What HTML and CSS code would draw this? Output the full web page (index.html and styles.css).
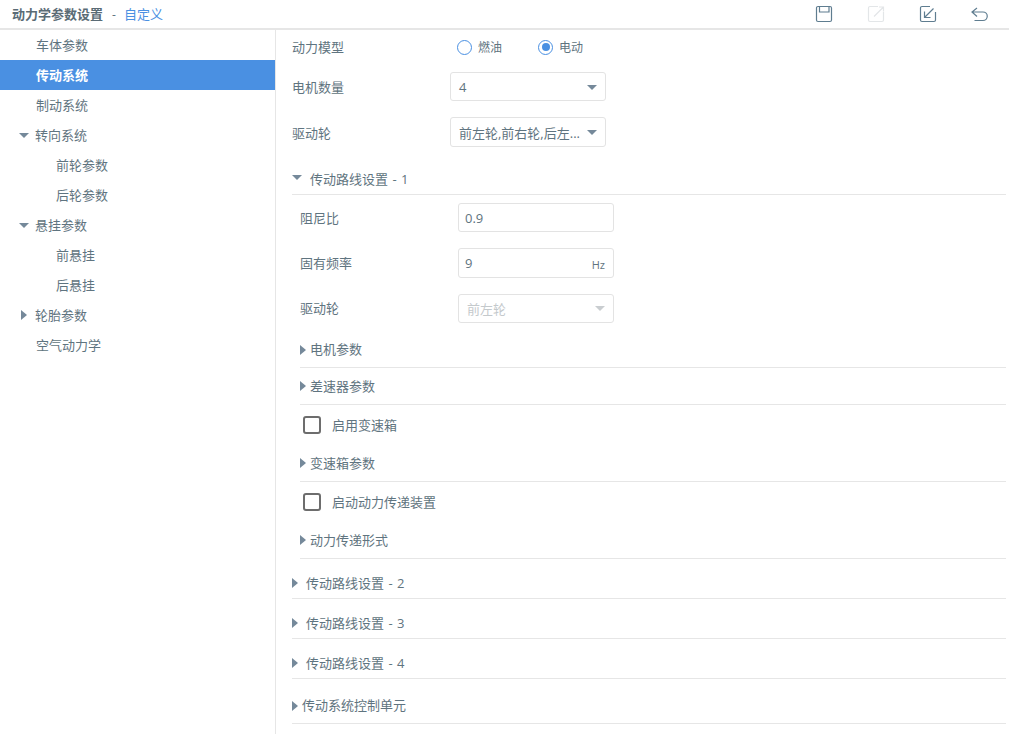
FILE: index.html
```html
<!DOCTYPE html>
<html lang="zh-CN">
<head>
    <meta charset="UTF-8">
    <title>动力学参数设置</title>
    <link rel="stylesheet" href="styles.css">
</head>
<body>

    <!-- Header -->
    <div class="header">
        <div class="title"><b>动力学参数设置</b><span class="dash">-</span><span class="custom">自定义</span></div>
        <div class="tools">
            <svg class="tool" viewBox="0 0 18 18"><path d="M3 1.500h12a1.500 1.500 0 0 1 1.500 1.500v12a1.500 1.500 0 0 1-1.500 1.500H3A1.500 1.500 0 0 1 1.500 15V3A1.500 1.500 0 0 1 3 1.500zM4.500 1.500v5.500h9.500V1.500"/></svg>
            <svg class="tool off" viewBox="0 0 18 18"><path d="M16.500 7v8a1.500 1.500 0 0 1-1.500 1.500H3A1.500 1.500 0 0 1 1.500 15V3A1.500 1.500 0 0 1 3 1.500h8M7 11.500l9-9M12 2h4.500v4.500"/></svg>
            <svg class="tool" viewBox="0 0 18 18"><path d="M16.500 7v8a1.500 1.500 0 0 1-1.500 1.500H3A1.500 1.500 0 0 1 1.500 15V3A1.500 1.500 0 0 1 3 1.500h8M14.500 3.500l-9 9M5.500 6.500v6h6"/></svg>
            <svg class="tool" viewBox="0 0 18 18"><path d="M6 3L1 7l5 4.500M1 7h11a4.250 4.250 0 0 1 0 8.500H3.500"/></svg>
        </div>
    </div>

    <div class="page">
        <!-- Left tree -->
        <div class="tree">
            <div class="node lv1">车体参数</div>
            <div class="node lv1 active">传动系统</div>
            <div class="node lv1">制动系统</div>
            <div class="node lv1 parent"><i class="arrow down"></i>转向系统</div>
            <div class="node lv2">前轮参数</div>
            <div class="node lv2">后轮参数</div>
            <div class="node lv1 parent"><i class="arrow down"></i>悬挂参数</div>
            <div class="node lv2">前悬挂</div>
            <div class="node lv2">后悬挂</div>
            <div class="node lv1 parent"><i class="arrow right"></i>轮胎参数</div>
            <div class="node lv1">空气动力学</div>
        </div>

        <!-- Form -->
        <div class="content">
            <div class="row row-radio">
                <label class="lbl">动力模型</label>
                <span class="radio"></span><span class="radio-text">燃油</span>
                <span class="radio on"></span><span class="radio-text">电动</span>
            </div>
            <div class="row row-motor">
                <label class="lbl">电机数量</label>
                <div class="select">4<i class="arrow down sel"></i></div>
            </div>
            <div class="row row-wheel">
                <label class="lbl">驱动轮</label>
                <div class="select">前左轮,前右轮,后左...<i class="arrow down sel"></i></div>
            </div>

            <div class="group g1"><i class="arrow down"></i>传动路线设置 - 1</div>

            <div class="sub">
                <div class="row f1">
                    <label class="lbl">阻尼比</label>
                    <div class="select field">0.9</div>
                </div>
                <div class="row f2">
                    <label class="lbl">固有频率</label>
                    <div class="select field">9<span class="unit">Hz</span></div>
                </div>
                <div class="row f3">
                    <label class="lbl">驱动轮</label>
                    <div class="select disabled">前左轮<i class="arrow down sel"></i></div>
                </div>
                <div class="fold s1"><i class="arrow right"></i>电机参数</div>
                <div class="fold s2"><i class="arrow right"></i>差速器参数</div>
                <div class="check"><span class="box"></span>启用变速箱</div>
                <div class="fold s2"><i class="arrow right"></i>变速箱参数</div>
                <div class="check"><span class="box"></span>启动动力传递装置</div>
                <div class="fold s2"><i class="arrow right"></i>动力传递形式</div>
            </div>

            <div class="group g2"><i class="arrow right"></i>传动路线设置 - 2</div>
            <div class="group g2"><i class="arrow right"></i>传动路线设置 - 3</div>
            <div class="group g2"><i class="arrow right"></i>传动路线设置 - 4</div>
            <div class="group g3"><i class="arrow right"></i>传动系统控制单元</div>
        </div>
    </div>

</body>
</html>
```

FILE: styles.css
```css
* {
    margin: 0;
    padding: 0;
    box-sizing: border-box;
}
html, body {
    height: 100%;
    overflow: hidden;
}
body {
    font-family: "Open Sans", "Noto Sans CJK SC", sans-serif;
    font-size: 13px;
    color: #5f7480;
    background: #fff;
    display: flex;
    flex-direction: column;
}

/* Header */
.header {
    height: 30px;
    flex: none;
    display: flex;
    justify-content: space-between;
    align-items: center;
    padding: 0 20px 0 12px;
    border-bottom: 2px solid #e6e6e6;
}
.title {
    margin-bottom: 2px;
}
.title b {
    font-weight: 700;
    color: #5a6b75;
}
.dash {
    margin: 0 8px 0 9px;
    font-size: 12px;
}
.custom {
    color: #4a90e2;
}
.tools {
    display: flex;
    gap: 34px;
}
.tool {
    width: 18px;
    height: 18px;
    fill: none;
    stroke: #5f7d90;
    stroke-width: 1.2;
}
.tool.off {
    stroke: #e3e6e8;
}

/* Tree */
.page {
    flex: 1;
    display: flex;
    min-height: 0;
}
.tree {
    width: 276px;
    flex: none;
    border-right: 1px solid #e6e6e6;
}
.node {
    height: 30px;
    line-height: 31px;
    position: relative;
}
.lv1 {
    padding-left: 36px;
}
.lv1.parent {
    padding-left: 35px;
}
.lv2 {
    padding-left: 56px;
}
.node.active {
    background: #4a90e2;
    color: #fff;
    font-weight: 700;
}
.node .arrow {
    position: absolute;
    left: 19px;
    top: 13px;
}
.node .arrow.right {
    left: 21px;
    top: 10px;
}

/* Arrows */
.arrow {
    display: inline-block;
    width: 0;
    height: 0;
    border-style: solid;
    border-color: transparent;
}
.arrow.down {
    border-width: 5px 5px 0;
    border-top-color: #75899a;
}
.arrow.right {
    border-width: 5px 0 5px 6px;
    border-left-color: #75899a;
}
.arrow.sel {
    position: absolute;
    right: 8px;
    top: 12px;
}

/* Form */
.content {
    flex: 1;
    padding: 0 3px 0 16px;
    min-width: 0;
}
.row {
    display: flex;
    align-items: center;
}
.lbl {
    width: 158px;
    flex: none;
}
.row-radio {
    height: 30px;
    padding-top: 2px;
}
.row-motor {
    height: 29px;
    margin-top: 12px;
}
.row-wheel {
    height: 30px;
    margin-top: 16px;
}
.radio {
    width: 15px;
    height: 15px;
    margin: 2px 6px 0 7px;
    border: 1px solid #4a90e2;
    border-radius: 50%;
    position: relative;
}
.radio.on::after {
    content: "";
    position: absolute;
    left: 2.5px;
    top: 2.5px;
    width: 8px;
    height: 8px;
    border-radius: 50%;
    background: #4a90e2;
}
.radio-text {
    margin-top: 2px;
    margin-right: 29px;
    font-size: 12px;
}
.select {
    width: 156px;
    height: 100%;
    border: 1px solid #e3e3e3;
    border-radius: 3px;
    padding-left: 8px;
    display: flex;
    align-items: center;
    position: relative;
}
.select.field {
    padding-left: 6px;
}
.select.disabled {
    color: #c4c9cc;
}
.select.disabled .arrow {
    top: 11px;
    border-top-color: #c9cdd0;
}
.unit {
    position: absolute;
    right: 8px;
    top: 8px;
    font-size: 11px;
}

/* Collapsible groups */
.group {
    position: relative;
    border-bottom: 1px solid #e6e6e6;
    word-spacing: 1px;
}
.group .arrow {
    position: absolute;
    left: 0;
}
.g1 {
    height: 31px;
    margin-top: 17px;
    padding-left: 18px;
    line-height: 30px;
}
.g1 .arrow {
    top: 11px;
}
.g2 {
    height: 40px;
    padding: 11px 0 0 14px;
    line-height: 26px;
}
.g2 .arrow {
    top: 19px;
}
.g3 {
    height: 45px;
    padding: 13px 0 0 10px;
    line-height: 26px;
}
.g3 .arrow {
    top: 22px;
}
.sub {
    padding-left: 8px;
}
.f1 {
    height: 29px;
    margin-top: 8px;
}
.f2 {
    height: 30px;
    margin-top: 16px;
}
.f3 {
    height: 29px;
    margin-top: 16px;
}
.f2 .lbl, .f3 .lbl {
    margin-bottom: 2px;
}
.fold {
    position: relative;
    height: 37px;
    border-bottom: 1px solid #e6e6e6;
    padding-left: 10px;
}
.fold .arrow {
    position: absolute;
    left: 0;
}
.s1 {
    height: 45px;
    padding-top: 16px;
}
.s1 .arrow {
    top: 22px;
}
.s2 {
    padding-top: 8px;
}
.s2 .arrow {
    top: 13px;
}
.check {
    display: flex;
    align-items: center;
    height: 40px;
    padding: 0 0 2px 3px;
}
.box {
    width: 18px;
    height: 18px;
    border: 2px solid #6d6d6d;
    border-radius: 3px;
    margin: 2px 11px 0 0;
}
```
